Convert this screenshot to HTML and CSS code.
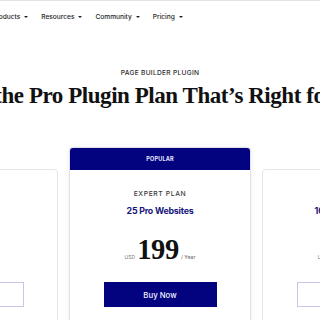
FILE: index.html
```html
<!DOCTYPE html>
<html lang="en">
<head>
<meta charset="utf-8">
<title>Pricing</title>
<link rel="stylesheet" href="styles.css">
</head>
<body>
<header class="topbar">
  <nav class="nav">
    <a class="nav-item">Products <span class="caret"></span></a>
    <a class="nav-item">Resources <span class="caret"></span></a>
    <a class="nav-item">Community <span class="caret"></span></a>
    <a class="nav-item">Pricing <span class="caret"></span></a>
  </nav>
</header>
<main class="main">
  <p class="eyebrow">PAGE BUILDER PLUGIN</p>
  <div class="title-wrap">
    <h1 class="title">Find the Pro Plugin Plan That’s Right for You</h1>
  </div>
  <section class="plans">
    <div class="card side">
      <div class="card-body">
        <p class="plan-name">ADVANCED PLAN</p>
        <p class="plan-sites">3 Pro Websites</p>
        <div class="price"><span class="cur">USD</span><span class="amount">99</span><span class="per">/ Year</span></div>
        <a class="btn outline">Buy Now</a>
      </div>
    </div>
    <div class="card popular">
      <div class="card-head">POPULAR</div>
      <div class="card-body">
        <p class="plan-name">EXPERT PLAN</p>
        <p class="plan-sites">25 Pro Websites</p>
        <div class="price"><span class="cur">USD</span><span class="amount">199</span><span class="per">/ Year</span></div>
        <a class="btn solid">Buy Now</a>
      </div>
    </div>
    <div class="card side">
      <div class="card-body">
        <p class="plan-name">AGENCY PLAN</p>
        <p class="plan-sites">1000 Pro Websites</p>
        <div class="price"><span class="cur">USD</span><span class="amount">399</span><span class="per">/ Year</span></div>
        <a class="btn outline">Buy Now</a>
      </div>
    </div>
  </section>
</main>
</body>
</html>
```
FILE: styles.css
```css
html, body {
  margin: 0;
  padding: 0;
  background: #ffffff;
  overflow: hidden;
}
body {
  width: 320px;
  height: 320px;
  font-family: Inter, "Liberation Sans", sans-serif;
  color: #1a1a1a;
}
.topbar {
  border-top: 1px solid #e4e4e4;
  height: 31px;
  display: flex;
  align-items: center;
}
.nav {
  display: flex;
  align-items: center;
  gap: 13px;
  margin-left: -8px;
  white-space: nowrap;
}
.nav-item {
  font-size: 6.6px;
  font-weight: 500;
  color: #1e1e1e;
  display: flex;
  align-items: center;
  gap: 4px;
}
.caret {
  width: 0;
  height: 0;
  border-left: 2px solid transparent;
  border-right: 2px solid transparent;
  border-top: 2.5px solid #222;
}
.main {
  display: flex;
  flex-direction: column;
  align-items: center;
}
.eyebrow {
  margin: 36px 0 0;
  font-size: 6.6px;
  font-weight: 500;
  letter-spacing: 0.3px;
  color: #2a2a2a;
  line-height: 10px;
}
.title-wrap {
  width: 320px;
  display: flex;
  justify-content: center;
  margin-top: 4px;
}
.title {
  margin: 0;
  flex: none;
  white-space: nowrap;
  font-family: "Liberation Serif", serif;
  font-weight: 700;
  font-size: 23px;
  letter-spacing: -0.45px;
  line-height: 28px;
  color: #111;
}
.plans {
  margin-top: 37px;
  display: flex;
  gap: 11px;
  justify-content: center;
  align-items: flex-start;
  width: 320px;
}
.card {
  flex: none;
  width: 182px;
  box-sizing: border-box;
  border: 1px solid #e6e6ea;
  border-radius: 4px;
  background: #fff;
  height: 200px;
}
.card.side {
  margin-top: 22px;
}
.card.popular {
  border-color: #e0e0e6;
  box-shadow: 0 0 6px rgba(0,0,0,0.06);
  overflow: hidden;
}
.card-head {
  background: #030380;
  height: 22px;
  display: flex;
  align-items: center;
  justify-content: center;
  color: #e8e8ff;
  font-size: 5.5px;
  font-weight: 700;
  letter-spacing: 0.2px;
}
.card-body {
  display: flex;
  flex-direction: column;
  align-items: center;
  padding-top: 19px;
}
.plan-name {
  margin: 0;
  font-size: 6.8px;
  font-weight: 500;
  letter-spacing: 0.6px;
  color: #3a3a3a;
  line-height: 10px;
}
.plan-sites {
  margin: 7px 0 0;
  font-size: 8.8px;
  font-weight: 700;
  color: #16167a;
  letter-spacing: -0.2px;
  line-height: 10px;
}
.price {
  margin-top: 18px;
  display: flex;
  align-items: baseline;
  gap: 2px;
  height: 34px;
}
.cur {
  font-size: 5px;
  color: #777;
}
.amount {
  font-family: "Liberation Serif", serif;
  font-weight: 700;
  font-size: 28.5px;
  color: #111;
  letter-spacing: -0.3px;
}
.per {
  font-size: 5.2px;
  color: #666;
}
.btn {
  margin-top: 14px;
  width: 113px;
  height: 25px;
  box-sizing: border-box;
  display: flex;
  align-items: center;
  justify-content: center;
  font-size: 7.8px;
  font-weight: 500;
}
.btn.solid {
  background: #030380;
  color: #f2f2ff;
}
.btn.outline {
  border: 1px solid #c9c6ec;
  color: #030380;
}
```
